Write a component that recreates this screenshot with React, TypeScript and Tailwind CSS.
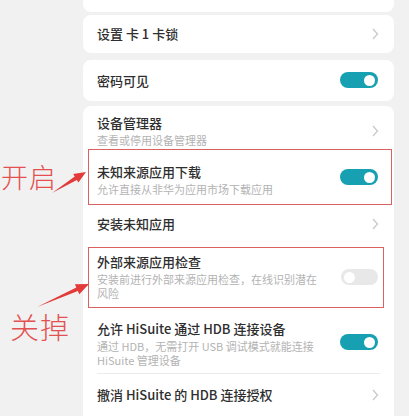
import React from "react";

const Chevron = () => (
  <svg width="8" height="12" viewBox="0 0 8 12" className="shrink-0 translate-x-[1px]">
    <polyline points="2,1 6.5,6 2,11" fill="none" stroke="#c9c9c9" strokeWidth="1.3" />
  </svg>
);

const Toggle = ({ on }: { on: boolean }) =>
  on ? (
    <div className="flex h-[16px] w-[38px] shrink-0 items-center justify-end rounded-full bg-[#17a0b2] pr-[3px]">
      <div className="h-[11px] w-[11px] rounded-full bg-white" />
    </div>
  ) : (
    <div className="flex h-[16px] w-[37px] shrink-0 items-center rounded-full bg-[#e8e8e8] pl-[3px]">
      <div className="h-[11px] w-[11px] rounded-full bg-white" />
    </div>
  );

function Row({
  title,
  sub,
  right,
  className,
  textClass = "",
}: {
  title: string;
  sub?: string;
  right: React.ReactNode;
  className: string;
  textClass?: string;
}) {
  return (
    <div className={`flex items-center justify-between pl-[14px] pr-[16px] ${className}`}>
      <div className={`flex flex-col ${textClass}`}>
        <div className="text-[13px] font-medium leading-[16px] text-[#2e2e2e]">{title}</div>
        {sub && (
          <div className="mt-[2px] w-[228px] text-[11px] leading-[14px] text-[#b3b3b3]">{sub}</div>
        )}
      </div>
      {right}
    </div>
  );
}

export default function App() {
  return (
    <div
      className="relative flex h-[416px] w-[409px] overflow-hidden bg-[#f1f1f1]"
      style={{ fontFamily: '"Noto Sans CJK SC", "Noto Sans", sans-serif' }}
    >
      <div className="w-[83px] shrink-0" />
      <div className="flex w-[311px] shrink-0 flex-col">
        <div className="h-[12px] rounded-b-[8px] bg-white" />
        <div className="mt-[3px] h-[40px] rounded-[8px] bg-white">
          <Row title="设置 卡 1 卡锁" right={<Chevron />} className="h-full" />
        </div>
        <div className="mt-[7px] h-[43px] rounded-[8px] bg-white">
          <Row title="密码可见" right={<Toggle on />} className="h-full" textClass="mt-[2px]" />
        </div>
        <div className="relative mt-[5px] flex flex-1 flex-col rounded-t-[8px] bg-white">
          <Row title="设备管理器" sub="查看或停用设备管理器" right={<Chevron />} className="h-[43px] pt-[6px]" />
          <Row
            title="未知来源应用下载"
            sub="允许直接从非华为应用市场下载应用"
            right={<Toggle on />}
            className="h-[56px]"
            textClass="mt-[5px]"
          />
          <Row title="安装未知应用" right={<Chevron />} className="h-[38px]" />
          <Row
            title="外部来源应用检查"
            sub="安装前进行外部来源应用检查，在线识别潜在风险"
            right={<Toggle on={false} />}
            className="h-[68px]"
          />
          <Row
            title="允许 HiSuite 通过 HDB 连接设备"
            sub="通过 HDB，无需打开 USB 调试模式就能连接 HiSuite 管理设备"
            right={<Toggle on />}
            className="h-[62px]"
            textClass="mt-[3px]"
          />
          <div className="mx-[14px] h-px bg-[#ececec]" />
          <Row title="撤消 HiSuite 的 HDB 连接授权" right={<Chevron />} className="h-[42px]" />

          <div className="pointer-events-none absolute left-[5px] top-[43px] h-[56px] w-[304px] border border-[#d9625f]" />
          <div className="pointer-events-none absolute left-[5px] top-[141px] h-[61px] w-[296px] border border-[#d9625f]" />
        </div>
      </div>

      <div className="absolute left-[1px] top-[163px] text-[27px] font-light leading-none tracking-[1px] text-[#e35050]">
        开启
      </div>
      <div className="absolute left-[10px] top-[312px] text-[29px] font-light leading-none tracking-[1px] text-[#e35050]">
        关掉
      </div>
      <svg className="pointer-events-none absolute left-0 top-0" width="409" height="416">
        <polygon
          points="52,193 76.85,180 78.4,182.5 86,172 73.2,174.1 74.75,176.6"
          fill="#e33a3a"
        />
        <polygon
          points="37,307 77.9,291.1 79.3,294.3 89,284 74.9,284.2 76.3,287.4"
          fill="#e33a3a"
        />
      </svg>
    </div>
  );
}
